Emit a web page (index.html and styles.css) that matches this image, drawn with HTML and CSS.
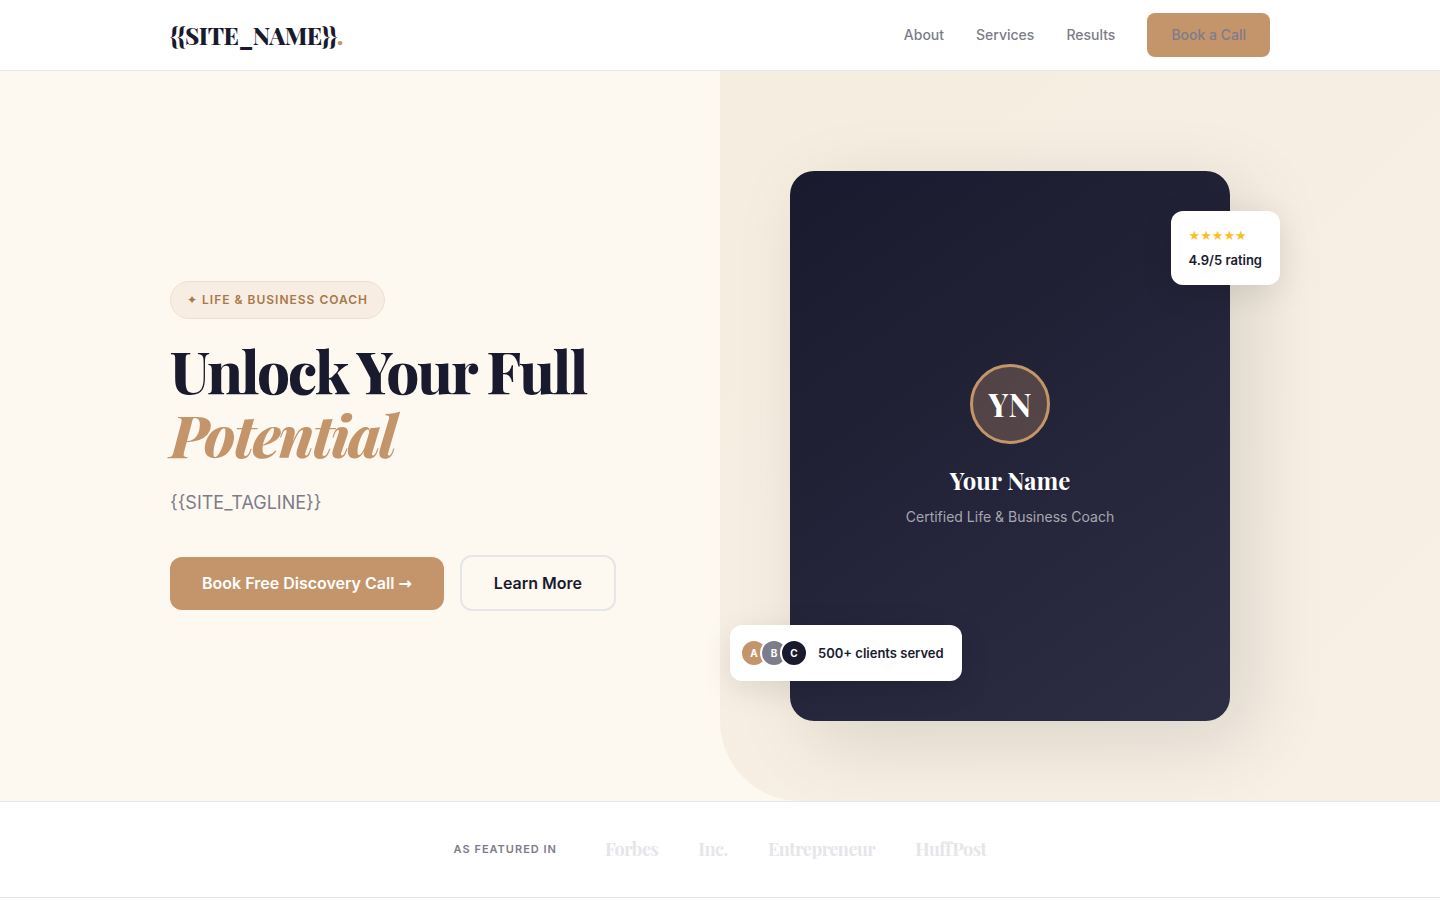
FILE: index.html
```html
<!DOCTYPE html>
<html lang="en">
<head>
    <meta charset="UTF-8">
    <meta name="viewport" content="width=device-width, initial-scale=1.0">
    <title>{{SITE_NAME}}</title>
    <link rel="stylesheet" href="styles.css">
</head>
<body>

    <header class="header">
        <nav class="container nav">
            <a href="#" class="logo">{{SITE_NAME}}<span>.</span></a>
            <ul class="nav-links">
                <li><a href="#about">About</a></li>
                <li><a href="#services">Services</a></li>
                <li><a href="#results">Results</a></li>
                <li><a href="#book" class="nav-cta">Book a Call</a></li>
            </ul>
        </nav>
    </header>

    <main>
        <section class="hero">
            <div class="container hero-grid">
                <div class="hero-content">
                    <div class="hero-badge"><span class="symbol">✦</span> Life &amp; Business Coach</div>
                    <h1>Unlock Your Full <em>Potential</em></h1>
                    <p>{{SITE_TAGLINE}}</p>
                    <div class="hero-actions">
                        <a href="#book" class="btn btn-primary">Book Free Discovery Call <span class="symbol">→</span></a>
                        <a href="#about" class="btn btn-outline">Learn More</a>
                    </div>
                </div>

                <div class="hero-visual">
                    <div class="coach-card">
                        <div class="coach-avatar">YN</div>
                        <h2>Your Name</h2>
                        <p>Certified Life &amp; Business Coach</p>

                        <div class="float-card rating">
                            <div class="stars symbol">★★★★★</div>
                            <div>4.9/5 rating</div>
                        </div>
                        <div class="float-card clients">
                            <div class="avatars">
                                <span class="avatar accent">A</span>
                                <span class="avatar grey">B</span>
                                <span class="avatar dark">C</span>
                            </div>
                            <div>500+ clients served</div>
                        </div>
                    </div>
                </div>
            </div>
        </section>

        <section class="featured">
            <div class="container featured-row">
                <span class="featured-label">As Featured In</span>
                <ul class="featured-logos">
                    <li>Forbes</li>
                    <li>Inc.</li>
                    <li>Entrepreneur</li>
                    <li>HuffPost</li>
                </ul>
            </div>
        </section>
    </main>

</body>
</html>
```
FILE: styles.css
```css
:root {
    --dark: #1a1a2e;
    --accent: #c4956a;
    --accent-dark: #a87849;
    --cream: #fef9f0;
    --grey: #7c7c8a;
    --border: #e5e5ea;
    --serif: 'Playfair Display', 'Liberation Serif', serif;
    --sans: 'Inter', 'Liberation Sans', sans-serif;
}

* {
    margin: 0;
    padding: 0;
    box-sizing: border-box;
}

body {
    font-family: var(--sans);
    font-size: 16px;
    line-height: 1.7;
    color: var(--dark);
    background: #fff;
    overflow-x: hidden;
}

a {
    color: inherit;
    text-decoration: none;
}

ul {
    list-style: none;
}

.container {
    max-width: 1148px;
    margin: 0 auto;
    padding: 0 24px;
}

.symbol {
    font-family: 'DejaVu Sans', sans-serif;
}

/* Header */
.header {
    background: #fff;
    border-bottom: 1px solid var(--border);
}

.nav {
    display: flex;
    align-items: center;
    justify-content: space-between;
    height: 70px;
}

.logo {
    font-family: var(--serif);
    font-size: 24px;
    font-weight: 800;
    letter-spacing: -0.5px;
}

.logo span {
    color: var(--accent);
}

.nav-links {
    display: flex;
    align-items: center;
    gap: 32px;
    font-size: 14px;
    font-weight: 500;
    color: var(--grey);
}

.nav-cta {
    display: block;
    padding: 10px 24px;
    background: var(--accent);
    border-radius: 8px;
}

/* Hero */
.hero {
    position: relative;
    padding: 100px 0 80px;
    background: var(--cream);
    overflow: hidden;
}

.hero::before {
    content: '';
    position: absolute;
    top: 0;
    right: 0;
    width: 50%;
    height: 100%;
    background: linear-gradient(135deg, #f5ede0, #f8f0e5);
    border-radius: 0 0 0 80px;
}

.hero-grid {
    position: relative;
    display: grid;
    grid-template-columns: 1fr 1fr;
    gap: 60px;
    align-items: center;
}

.hero-badge {
    display: inline-block;
    padding: 8px 16px;
    margin-bottom: 20px;
    font-size: 12px;
    font-weight: 600;
    letter-spacing: 1px;
    text-transform: uppercase;
    color: var(--accent-dark);
    background: #f7ede2;
    border: 1px solid #eedfcd;
    border-radius: 50px;
}

.hero h1 {
    margin-bottom: 20px;
    font-family: var(--serif);
    font-size: 58px;
    font-weight: 800;
    line-height: 1.1;
    letter-spacing: -2px;
}

.hero h1 em {
    display: block;
    color: var(--accent);
}

.hero-content p {
    margin-bottom: 36px;
    font-size: 18px;
    line-height: 1.8;
    color: var(--grey);
}

.hero-actions {
    display: flex;
    flex-wrap: wrap;
    align-items: center;
    gap: 16px;
}

.btn {
    padding: 16px 32px;
    font-size: 16px;
    font-weight: 600;
    line-height: 20px;
    border-radius: 12px;
}

.btn-primary {
    color: #fff;
    background: var(--accent);
}

.btn-outline {
    border: 2px solid var(--border);
}

.hero-visual {
    display: flex;
    justify-content: center;
}

.coach-card {
    position: relative;
    display: flex;
    flex-direction: column;
    align-items: center;
    justify-content: center;
    width: 100%;
    max-width: 440px;
    min-height: 550px;
    color: #fff;
    background: linear-gradient(145deg, #1a1a2e, #2d2d44);
    border-radius: 24px;
    box-shadow: 20px 20px 80px rgba(0, 0, 0, 0.12);
}

.coach-avatar {
    display: flex;
    align-items: center;
    justify-content: center;
    width: 80px;
    height: 80px;
    margin-bottom: 16px;
    font-family: var(--serif);
    font-size: 32px;
    font-weight: 700;
    background: rgba(196, 149, 106, 0.3);
    border: 3px solid var(--accent);
    border-radius: 50%;
}

.coach-card h2 {
    margin-bottom: 4px;
    font-family: var(--serif);
    font-size: 24px;
    font-weight: 700;
}

.coach-card p {
    font-size: 14px;
    color: rgba(255, 255, 255, 0.6);
}

.float-card {
    position: absolute;
    font-size: 13px;
    font-weight: 600;
    color: var(--dark);
    background: #fff;
    border-radius: 12px;
    box-shadow: 0 8px 32px rgba(0, 0, 0, 0.1);
}

.rating {
    top: 40px;
    right: -50px;
    padding: 14px 18px;
}

.stars {
    margin-bottom: 2px;
    font-weight: 400;
    color: #fbbf24;
}

.clients {
    bottom: 40px;
    left: -60px;
    display: flex;
    align-items: center;
    gap: 10px;
    padding: 14px 18px 14px 10px;
}

.avatars {
    display: flex;
}

.avatar {
    display: flex;
    align-items: center;
    justify-content: center;
    width: 28px;
    height: 28px;
    font-size: 10px;
    font-weight: 700;
    color: #fff;
    border: 2px solid #fff;
    border-radius: 50%;
}

.avatar + .avatar {
    margin-left: -8px;
}

.accent {
    background: var(--accent);
}

.grey {
    background: var(--grey);
}

.dark {
    background: var(--dark);
}

/* Featured */
.featured {
    padding: 32px 0;
    border-top: 1px solid var(--border);
    border-bottom: 1px solid var(--border);
}

.featured-row {
    display: flex;
    flex-wrap: wrap;
    align-items: center;
    justify-content: center;
    gap: 48px;
}

.featured-label {
    font-size: 11px;
    font-weight: 600;
    letter-spacing: 1px;
    text-transform: uppercase;
    color: var(--grey);
}

.featured-logos {
    display: flex;
    flex-wrap: wrap;
    gap: 40px;
    font-family: var(--serif);
    font-size: 18px;
    font-weight: 700;
    letter-spacing: -0.5px;
    color: var(--border);
}
```
